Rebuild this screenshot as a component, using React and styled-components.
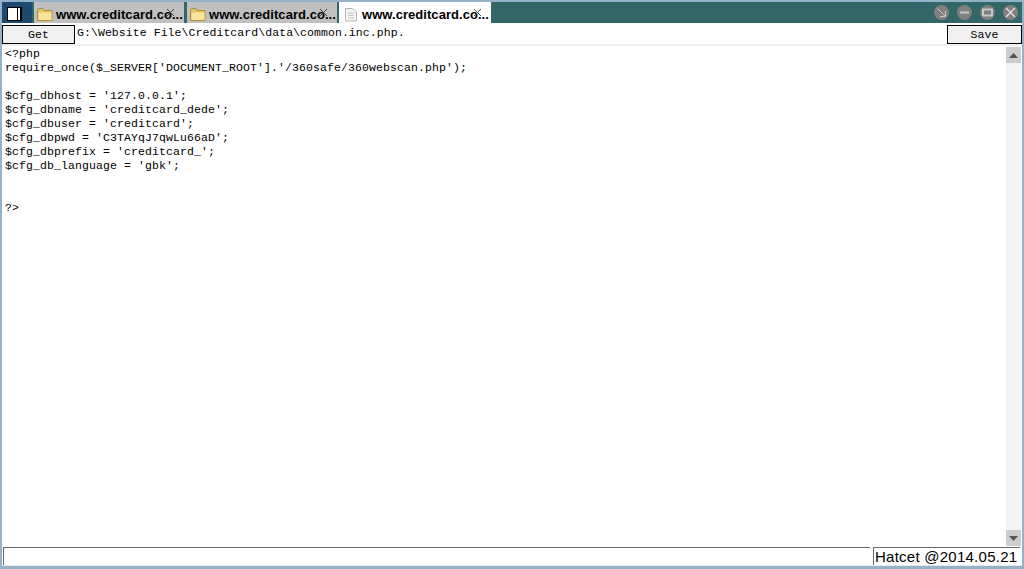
import React from 'react';
import styled, { createGlobalStyle } from 'styled-components';

const GlobalStyle = createGlobalStyle`
  html, body {
    margin: 0;
    padding: 0;
    height: 100%;
    overflow: hidden;
    background: #93b3cb;
  }
  #root { height: 100%; }
`;

const Frame = styled.div`
  box-sizing: border-box;
  width: 1024px;
  height: 569px;
  padding: 2px 2px 3px 2px;
  display: flex;
  flex-direction: column;
  background: #93b3cb;
  font-family: "Liberation Mono", monospace;
`;

const TitleBar = styled.div`
  height: 21px;
  flex: none;
  display: flex;
  align-items: stretch;
  background: #336666;
`;

const MenuBox = styled.div`
  box-sizing: border-box;
  width: 30px;
  flex: none;
  margin-right: 1px;
  padding: 3px 0 0 5px;
  display: flex;
  align-items: center;
  background: #1d4a6e;
`;

const TabRow = styled.div`
  display: flex;
  gap: 1px;
  flex: 1;
`;

const Tab = styled.div`
  position: relative;
  box-sizing: border-box;
  width: ${(p) => (p.$active ? '152px' : '152px')};
  padding: 3px 0 0 ${(p) => (p.$active ? '5px' : '3px')};
  display: flex;
  align-items: center;
  gap: ${(p) => (p.$active ? '4px' : '3px')};
  background: ${(p) => (p.$active ? '#ffffff' : '#c0c0c0')};
  border-left: ${(p) => (p.$active ? 'none' : '1px solid #336666')};
  border-right: ${(p) => (p.$active ? 'none' : '1px solid #336666')};
  color: #000;
  font: bold 13px "Liberation Sans", sans-serif;
  letter-spacing: 0.05px;
  white-space: nowrap;
  svg { flex: none; }
`;

const TabClose = styled.span`
  position: absolute;
  right: 9px;
  top: 6px;
  width: 9px;
  height: 9px;
  line-height: 0;
`;

const WindowButtons = styled.div`
  display: flex;
  align-items: center;
  gap: 8px;
  padding-right: 4px;
`;

const RoundButton = styled.div`
  width: 15px;
  height: 15px;
  border-radius: 50%;
  background: #808080;
  display: flex;
  align-items: center;
  justify-content: center;
`;

const Toolbar = styled.div`
  flex: none;
  padding-top: 2px;
  display: flex;
  align-items: stretch;
  background: #ffffff;
  border-bottom: 2px solid #f0f0f0;
`;

const ActionButton = styled.button`
  box-sizing: border-box;
  width: ${(p) => p.$width}px;
  height: 19px;
  padding: 0;
  flex: none;
  background: #f0f0f0;
  border: 1px solid #000;
  color: #000;
  font: 11.5px "Liberation Mono", monospace;
  letter-spacing: 0.1px;
`;

const PathLabel = styled.div`
  flex: 1;
  padding: 1px 0 0 2px;
  line-height: 13px;
  font-size: 11.5px;
  letter-spacing: 0.07px;
  color: #000;
  white-space: pre;
`;

const Body = styled.div`
  flex: 1;
  min-height: 0;
  display: flex;
  background: #ffffff;
`;

const Code = styled.pre`
  flex: 1;
  margin: 0;
  padding: 1px 0 0 3px;
  font: 11.5px/14px "Liberation Mono", monospace;
  letter-spacing: 0.1px;
  color: #000;
`;

const ScrollBar = styled.div`
  width: 15px;
  flex: none;
  margin-right: 1px;
  padding-top: 1px;
  display: flex;
  flex-direction: column;
  justify-content: space-between;
  background: #f4f4f4;
`;

const ScrollArrow = styled.div`
  height: 16px;
  background: #cdcdcd;
  display: flex;
  align-items: center;
  justify-content: center;
`;

const StatusBar = styled.div`
  box-sizing: border-box;
  height: 20px;
  padding: 1px 2px 0 1px;
  flex: none;
  display: flex;
  gap: 3px;
  background: #ffffff;
  border-bottom: 1px solid #e8e8e8;
`;

const StatusField = styled.div`
  box-sizing: border-box;
  flex: ${(p) => (p.$grow ? '1' : 'none')};
  width: ${(p) => (p.$grow ? 'auto' : '147px')};
  border-top: 1px solid #666;
  border-left: 1px solid #666;
  padding-left: 1px;
  font: 15px/18px "Liberation Sans", sans-serif;
  color: #000;
  letter-spacing: 0.25px;
`;

const FolderIcon = () => (
  <svg width="16" height="16" viewBox="0 0 16 16">
    <path d="M0.5 4.5 L1.5 2.5 H6 L7 4.5 H15 V14.5 H0.5 Z" fill="#e9c65f" stroke="#b08f38" />
    <rect x="1.5" y="6.5" width="13" height="7.5" fill="#f8e49a" />
    <path d="M2 3.5 H6" stroke="#9fd0a0" />
  </svg>
);

const FileIcon = () => (
  <svg width="14" height="16" viewBox="0 0 14 16">
    <path d="M1.5 2.5 H8.5 L12.5 6 V15 H1.5 Z" fill="#f4f4f4" stroke="#b4b4b4" />
    <path d="M4 7 H10 M4 9.5 H10 M4 12 H10" stroke="#c4c4c4" />
  </svg>
);

const CloseMark = () => (
  <svg width="9" height="9" viewBox="0 0 9 9">
    <path d="M1 1 L8 8 M8 1 L1 8" stroke="#444" strokeWidth="1" />
  </svg>
);

const ButtonGlyph = ({ kind }) => (
  <svg width="11" height="11" viewBox="0 0 11 11" fill="none" stroke="#c8c8c8">
    {kind === 'restore' && <path d="M1.5 1.5 L9 9 M4 9.5 H9.5 V4" />}
    {kind === 'minimize' && <path d="M1 5.5 H10" strokeWidth="2" />}
    {kind === 'maximize' && <rect x="1" y="2.5" width="9" height="6" strokeWidth="2" />}
    {kind === 'close' && <path d="M1 1 L10 10 M10 1 L1 10" strokeWidth="1.4" stroke="#e4e4e4" />}
  </svg>
);

const Arrow = ({ down }) => (
  <svg width="9" height="5" viewBox="0 0 9 5">
    <path d={down ? 'M0 0 H9 L4.5 5 Z' : 'M0 5 H9 L4.5 0 Z'} fill="#555" />
  </svg>
);

const tabs = [
  { id: 1, icon: <FolderIcon /> },
  { id: 2, icon: <FolderIcon /> },
  { id: 3, icon: <FileIcon />, active: true },
];

const source = `<?php
require_once($_SERVER['DOCUMENT_ROOT'].'/360safe/360webscan.php');

$cfg_dbhost = '127.0.0.1';
$cfg_dbname = 'creditcard_dede';
$cfg_dbuser = 'creditcard';
$cfg_dbpwd = 'C3TAYqJ7qwLu66aD';
$cfg_dbprefix = 'creditcard_';
$cfg_db_language = 'gbk';


?>`;

const App = () => {
  return (
    <Frame>
      <GlobalStyle />
      <TitleBar>
        <MenuBox>
          <svg width="15" height="14" viewBox="0 0 15 14">
            <rect width="15" height="14" fill="#000" />
            <rect x="1" y="1" width="9" height="12" fill="#fff" />
            <rect x="11" y="1" width="2" height="12" fill="#fff" />
          </svg>
        </MenuBox>
        <TabRow>
          {tabs.map((tab) => (
            <Tab key={tab.id} $active={tab.active}>
              {tab.icon}
              <span>www.creditcard.co...</span>
              <TabClose><CloseMark /></TabClose>
            </Tab>
          ))}
        </TabRow>
        <WindowButtons>
          <RoundButton><ButtonGlyph kind="restore" /></RoundButton>
          <RoundButton><ButtonGlyph kind="minimize" /></RoundButton>
          <RoundButton><ButtonGlyph kind="maximize" /></RoundButton>
          <RoundButton><ButtonGlyph kind="close" /></RoundButton>
        </WindowButtons>
      </TitleBar>
      <Toolbar>
        <ActionButton $width={73}>Get</ActionButton>
        <PathLabel>G:\Website File\Creditcard\data\common.inc.php.</PathLabel>
        <ActionButton $width={75}>Save</ActionButton>
      </Toolbar>
      <Body>
        <Code>{source}</Code>
        <ScrollBar>
          <ScrollArrow><Arrow /></ScrollArrow>
          <ScrollArrow><Arrow down /></ScrollArrow>
        </ScrollBar>
      </Body>
      <StatusBar>
        <StatusField $grow />
        <StatusField>Hatcet @2014.05.21</StatusField>
      </StatusBar>
    </Frame>
  );
};

export default App;
